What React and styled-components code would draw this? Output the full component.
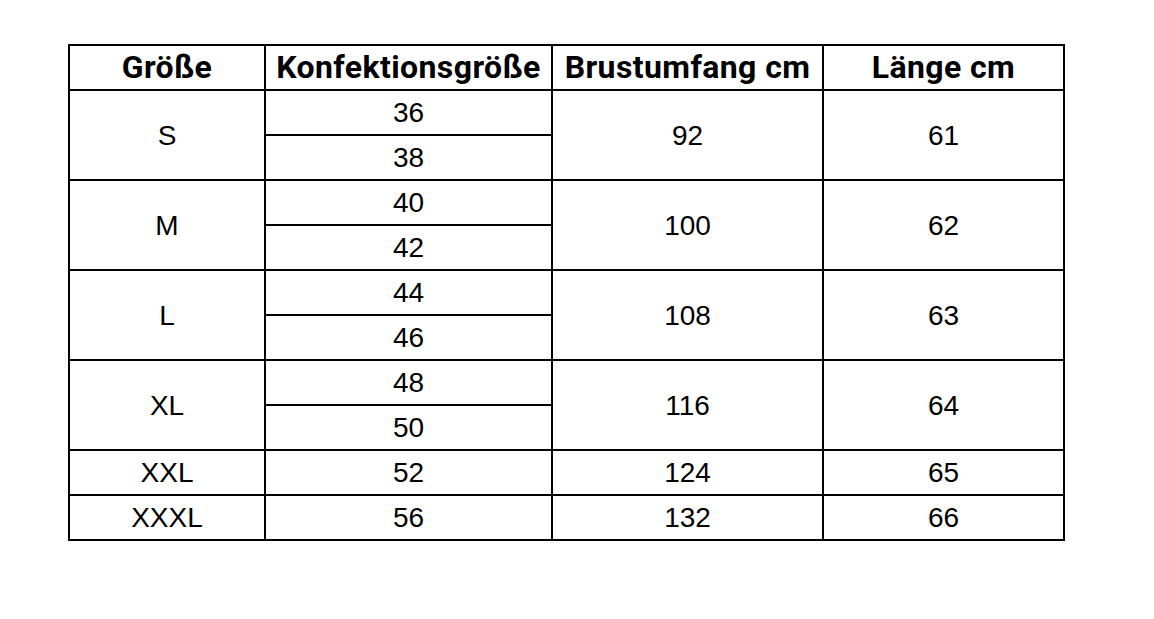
import React from 'react';
import styled, { createGlobalStyle } from 'styled-components';

const GlobalStyle = createGlobalStyle`
  html, body {
    margin: 0;
    padding: 0;
    background: #ffffff;
  }
  body {
    font-family: "Liberation Sans", Arial, sans-serif;
    color: #000;
  }
`;

const Page = styled.div`
  width: 1154px;
  height: 619px;
  padding: 44px 0 0 68px;
  box-sizing: border-box;
`;

const Table = styled.div`
  display: grid;
  grid-template-columns: 196px 287px 271px 241px;
  grid-template-rows: 45px repeat(10, 45px);
  width: max-content;
  border-top: 2px solid #000;
  border-left: 2px solid #000;
`;

const Cell = styled.div`
  display: flex;
  align-items: center;
  justify-content: center;
  border-right: 2px solid #000;
  border-bottom: 2px solid #000;
  box-sizing: border-box;
  font-size: 28px;
  line-height: 1;
  padding-top: 1px;
  grid-column: ${(p) => p.$col};
  grid-row: ${(p) => `${p.$row} / span ${p.$span || 1}`};
`;

const HeadCell = styled(Cell)`
  font-family: Roboto, "Liberation Sans", sans-serif;
  font-weight: 700;
  font-size: 32px;
  letter-spacing: 0.4px;
  padding-top: 0;
  padding-bottom: 2px;
`;

const sizes = [
  { size: 'S', konf: ['36', '38'], brust: '92', len: '61' },
  { size: 'M', konf: ['40', '42'], brust: '100', len: '62' },
  { size: 'L', konf: ['44', '46'], brust: '108', len: '63' },
  { size: 'XL', konf: ['48', '50'], brust: '116', len: '64' },
  { size: 'XXL', konf: ['52'], brust: '124', len: '65' },
  { size: 'XXXL', konf: ['56'], brust: '132', len: '66' },
];

const headers = ['Größe', 'Konfektionsgröße', 'Brustumfang cm', 'Länge cm'];

export default function App() {
  let row = 2;
  const body = sizes.map((r) => {
    const start = row;
    const n = r.konf.length;
    row += n;
    return (
      <React.Fragment key={r.size}>
        <Cell $col={1} $row={start} $span={n}>{r.size}</Cell>
        {r.konf.map((k, i) => (
          <Cell key={k} $col={2} $row={start + i}>{k}</Cell>
        ))}
        <Cell $col={3} $row={start} $span={n}>{r.brust}</Cell>
        <Cell $col={4} $row={start} $span={n}>{r.len}</Cell>
      </React.Fragment>
    );
  });

  return (
    <>
      <GlobalStyle />
      <Page>
        <Table>
          {headers.map((h, i) => (
            <HeadCell key={h} $col={i + 1} $row={1}>{h}</HeadCell>
          ))}
          {body}
        </Table>
      </Page>
    </>
  );
}
